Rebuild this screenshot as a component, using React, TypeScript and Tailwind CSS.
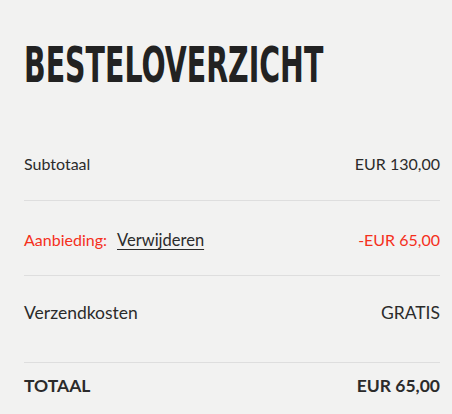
export default function App() {
  const rows = 'flex items-center justify-between border-b border-[#dedede]'
  return (
    <div className="min-h-[414px] w-[452px] overflow-hidden bg-[#f2f2f1] pl-6 pr-3 text-[#2b2b2b] [font-family:Lato,'Liberation_Sans',sans-serif]">
      <div className="pt-[39px] h-[128px]">
        <h1 className="inline-block origin-left scale-x-[0.645] whitespace-nowrap text-[49px] leading-[54px] font-bold text-[#222222] [font-family:'Liberation_Sans_Narrow','DejaVu_Sans_Condensed',sans-serif]">
          BESTELOVERZICHT
        </h1>
      </div>
      <div className={`${rows} pt-[26px] pb-[26px] text-[16px] leading-[20px]`}>
        <span>Subtotaal</span>
        <span>EUR 130,00</span>
      </div>
      <div className={`${rows} pt-[29px] pb-[25px] text-[16px] leading-[20px] text-[#f5301c]`}>
        <span>
          Aanbieding:
          <a href="#" className="ml-[10px] text-[16.5px] text-[#2b2b2b] underline underline-offset-[3px] decoration-1">Verwijderen</a>
        </span>
        <span>-EUR 65,00</span>
      </div>
      <div className={`${rows} pt-[26px] pb-[38px] text-[17.5px] leading-[22px]`}>
        <span>Verzendkosten</span>
        <span>GRATIS</span>
      </div>
      <div className="flex items-center justify-between pt-[12px] text-[17.5px] leading-[22px] font-bold">
        <span>TOTAAL</span>
        <span>EUR 65,00</span>
      </div>
    </div>
  )
}
